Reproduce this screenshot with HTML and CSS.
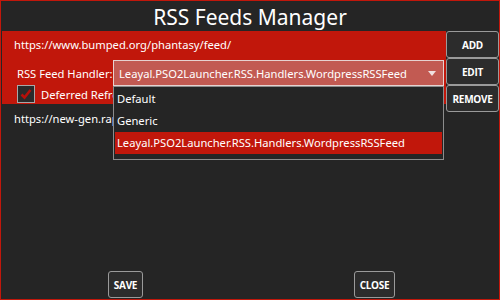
FILE: index.html
```html
<!DOCTYPE html>
<html>
<head>
<meta charset="utf-8">
<link rel="stylesheet" href="styles.css">
</head>
<body>
<div class="window">
  <header class="title">RSS Feeds Manager</header>
  <div class="main">
    <div class="list">
      <div class="item selected">
        <div class="url">https://www.bumped.org/phantasy/feed/</div>
        <div class="handler-row">
          <span class="label">RSS Feed Handler:</span>
          <div class="combo">
            <span class="combo-text">Leayal.PSO2Launcher.RSS.Handlers.WordpressRSSFeed</span>
            <svg class="arrow" width="8" height="5" viewBox="0 0 8 5"><path d="M0 0H8L4 5Z" fill="#f0e0e0"/></svg>
          </div>
        </div>
        <div class="check-row">
          <span class="checkbox"><svg width="16" height="16" viewBox="0 0 16 16"><path d="M3.5 8.5L6.5 11.5L12.5 4" fill="none" stroke="#b5100a" stroke-width="2.6"/></svg></span>
          <span class="check-label">Deferred Refresh</span>
        </div>
      </div>
      <div class="item">
        <div class="url">https://new-gen.rappy-burst.com/feed/</div>
      </div>
      <ul class="popup">
        <li>Default</li>
        <li>Generic</li>
        <li class="active">Leayal.PSO2Launcher.RSS.Handlers.WordpressRSSFeed</li>
      </ul>
    </div>
    <div class="side">
      <button class="btn side-btn">ADD</button>
      <button class="btn side-btn">EDIT</button>
      <button class="btn side-btn">REMOVE</button>
    </div>
  </div>
  <footer class="footer">
    <div class="cell"><button class="btn foot-btn">SAVE</button></div>
    <div class="cell"><button class="btn foot-btn">CLOSE</button></div>
  </footer>
</div>
</body>
</html>
```
FILE: styles.css
```css
html, body {
  margin: 0;
  padding: 0;
  background: #252525;
}
.window {
  box-sizing: border-box;
  width: 500px;
  height: 300px;
  border: 1px solid #c1170b;
  background: #252525;
  display: flex;
  flex-direction: column;
  font-family: "Noto Sans", "Open Sans", sans-serif;
  color: #ffffff;
}
.title {
  height: 30px;
  line-height: 32px;
  text-align: center;
  font-size: 21px;
}
.main {
  flex: 1;
  display: flex;
  align-items: flex-start;
}
.list {
  position: relative;
  margin-left: 1px;
  width: 444px;
  align-self: stretch;
}
.item {
  font-size: 11.2px;
}
.item.selected {
  background: #c1170b;
  height: 73px;
}
.url {
  height: 27px;
  line-height: 27px;
  padding-left: 12px;
  white-space: nowrap;
  overflow: hidden;
}
.item:not(.selected) .url {
  height: 30px;
  line-height: 30px;
}
.handler-row {
  display: flex;
  align-items: center;
  margin-top: 2px;
  padding-left: 15px;
  height: 26px;
}
.label {
  width: 96px;
  white-space: nowrap;
  overflow: hidden;
}
.combo {
  box-sizing: border-box;
  width: 331px;
  height: 26px;
  border: 1px solid #e6d2d0;
  background: #c25a52;
  display: flex;
  align-items: center;
  padding: 0 7px 0 5px;
}
.combo-text {
  flex: 1;
  white-space: nowrap;
}
.check-row {
  display: flex;
  align-items: center;
  margin-top: -1px;
  padding-left: 15px;
  height: 18px;
}
.checkbox {
  box-sizing: border-box;
  width: 18px;
  height: 18px;
  border: 1px solid #a8a8a8;
  background: #2a2a2a;
  display: flex;
  align-items: center;
  justify-content: center;
  margin-right: 6px;
}
.popup {
  position: absolute;
  left: 111px;
  top: 55px;
  box-sizing: border-box;
  width: 331px;
  height: 74px;
  margin: 0;
  padding: 1px 1px 4px 1px;
  list-style: none;
  background: #252525;
  border: 1px solid #8c8c8c;
  font-size: 11.2px;
}
.popup li {
  height: 22px;
  line-height: 22px;
  padding-left: 2px;
  white-space: nowrap;
}
.popup li.active {
  background: #c1170b;
}
.side {
  width: 53px;
  display: flex;
  flex-direction: column;
}
.btn {
  box-sizing: border-box;
  background: #2c2c2c;
  border: 1px solid #9a9a9a;
  border-radius: 3px;
  color: #ffffff;
  font-family: "Open Sans", "Noto Sans", sans-serif;
  font-weight: 700;
  font-size: 10px;
  letter-spacing: -0.3px;
  padding: 0;
  cursor: pointer;
}
.side-btn {
  width: 53px;
  height: 27px;
}
.footer {
  display: grid;
  grid-template-columns: 1fr 1fr;
  padding-bottom: 1px;
}
.cell {
  display: flex;
  justify-content: center;
}
.foot-btn {
  height: 27px;
  padding: 0 5px;
}
```
